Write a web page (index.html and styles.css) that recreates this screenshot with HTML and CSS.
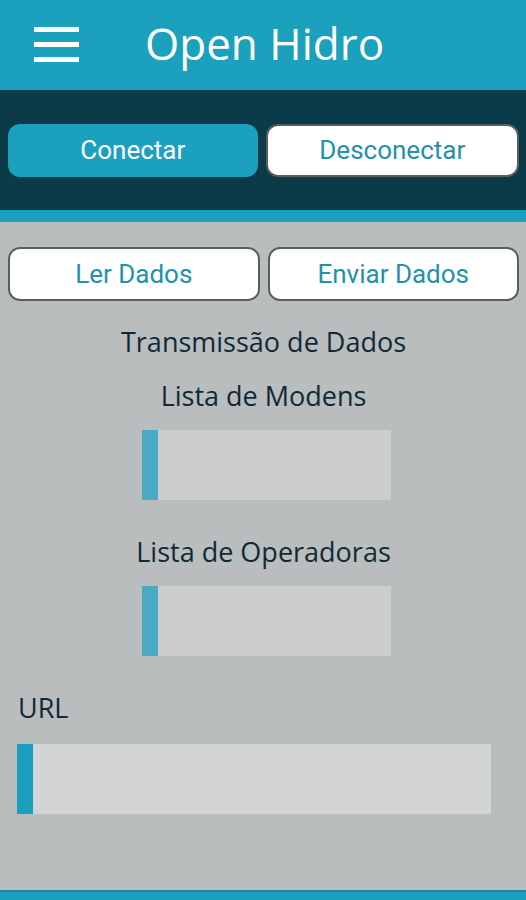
FILE: index.html
```html
<!DOCTYPE html>
<html lang="pt">
<head>
<meta charset="utf-8">
<title>Open Hidro</title>
<link rel="stylesheet" href="styles.css">
</head>
<body>
<div class="app">
  <header class="topbar">
    <div class="burger"><span></span><span></span><span></span></div>
    <h1 class="title">Open Hidro</h1>
  </header>
  <section class="connbar">
    <button class="btn btn-filled">Conectar</button>
    <button class="btn btn-outline">Desconectar</button>
  </section>
  <div class="strip"></div>
  <main class="content">
    <div class="row">
      <button class="btn btn-outline">Ler Dados</button>
      <button class="btn btn-outline">Enviar Dados</button>
    </div>
    <p class="label center first">Transmissão de Dados</p>
    <p class="label center">Lista de Modens</p>
    <div class="field narrow"><span class="bar"></span></div>
    <p class="label center ops">Lista de Operadoras</p>
    <div class="field narrow"><span class="bar"></span></div>
    <p class="label url">URL</p>
    <div class="field wide"><span class="bar bright"></span></div>
  </main>
  <div class="footstrip"></div>
</div>
</body>
</html>
```
FILE: styles.css
```css
* { box-sizing: border-box; }
html, body { margin: 0; padding: 0; }
body {
  width: 526px;
  height: 900px;
  overflow: hidden;
  background: #b9bdbe;
  font-family: "Open Sans", sans-serif;
}
.app {
  height: 900px;
  display: flex;
  flex-direction: column;
}
.topbar {
  height: 90px;
  background: #1ba0bd;
  display: flex;
  align-items: center;
  padding-left: 34px;
}
.burger {
  width: 45px;
  display: flex;
  flex-direction: column;
  gap: 10px;
  margin-top: -2px;
}
.burger span {
  display: block;
  height: 5px;
  background: #ffffff;
}
.title {
  margin: -4px 0 0 66px;
  font-family: "Open Sans", sans-serif;
  font-weight: 400;
  font-size: 44px;
  color: #ffffff;
  line-height: 1;
}
.connbar {
  height: 120px;
  background: #0b3b48;
  display: flex;
  align-items: center;
  gap: 8px;
  padding: 0 7px 0 8px;
}
.btn {
  flex: 1;
  height: 53px;
  border-radius: 12px;
  font-family: Roboto, sans-serif;
  font-size: 26px;
  padding: 0;
}
.btn-filled {
  background: #1ba0bd;
  color: #ffffff;
  border: none;
}
.btn-outline {
  background: #ffffff;
  color: #2391ab;
  border: 2px solid #5a5e60;
}
.strip {
  height: 12px;
  background: #1a9fbd;
}
.content {
  flex: 1;
  padding: 25px 7px 0 8px;
  display: flex;
  flex-direction: column;
}
.row {
  display: flex;
  gap: 8px;
}
.row .btn { height: 54px; }
.label {
  margin: 0;
  padding-top: 2px;
  font-size: 27px;
  color: #0f2a35;
  line-height: 36px;
}
.center { text-align: center; }
.first { margin-top: 21px; }
.label + .label { margin-top: 16px; }
.ops { margin-top: 32px; }
.url { margin-top: 32px; padding-left: 10px; }
.field {
  height: 70px;
  background: #cbcdce;
  display: flex;
  margin-top: 16px;
}
.narrow { width: 249px; align-self: flex-start; margin-left: 134px; }
.wide { width: 474px; margin-left: 9px; margin-top: 18px; background: #d3d4d5; }
.bar {
  width: 16px;
  background: #4aa9c5;
}
.bar.bright { background: #1a9fbd; }
.footstrip {
  height: 10px;
  background: #1aa0bd;
  border-top: 2px solid #1689a4;
}
```
